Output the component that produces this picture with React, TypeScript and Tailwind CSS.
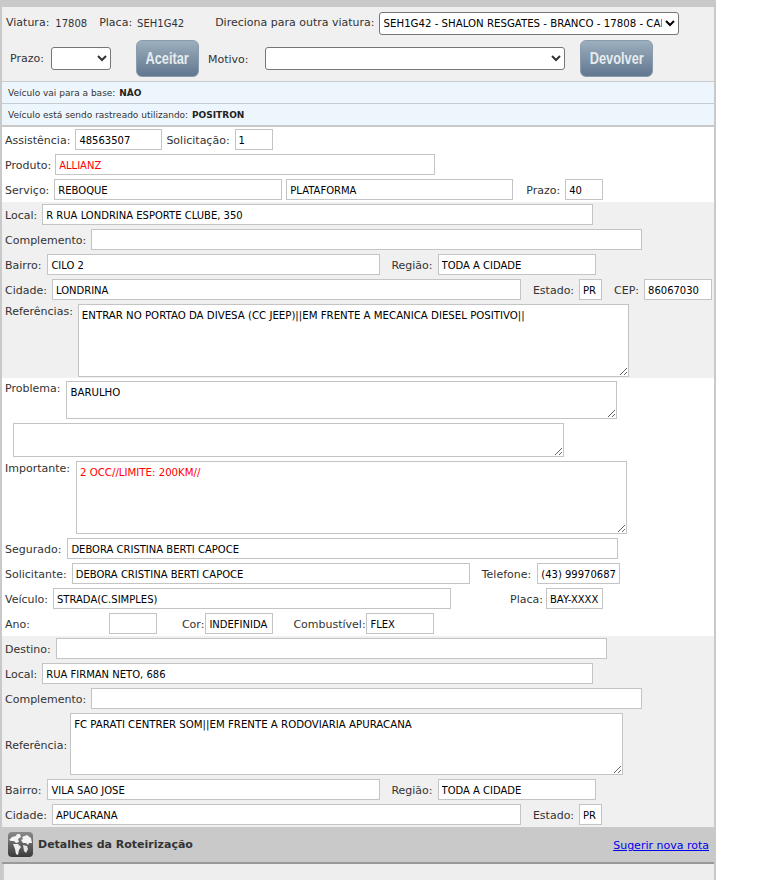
import React from "react";

const inputBase =
  "h-[21px] shrink-0 border border-[#c4c4c4] bg-white pl-[3px] pr-[3px] pt-[2px] text-[10px] font-['DejaVu_Sans',sans-serif] outline-none";
const inputCls = inputBase + " text-black";
const areaBase =
  "shrink-0 border border-[#c4c4c4] bg-white px-[3px] pt-[5px] text-[10.2px] leading-[12px] font-['DejaVu_Sans',sans-serif] outline-none";
const areaCls = areaBase + " text-black";
const labelCls = "pt-[4px] text-[11px] text-[#333] whitespace-nowrap";
const topLabelCls = "text-[11px] text-[#333] whitespace-nowrap";
const rowCls = "flex items-center h-[21px] mb-[4px]";

function Globe() {
  return (
    <svg width="25" height="25" viewBox="0 0 25 25" className="shrink-0">
      <defs>
        <linearGradient id="g" x1="0" y1="0" x2="0" y2="1">
          <stop offset="0" stopColor="#8a8a8a" />
          <stop offset="1" stopColor="#3a3a3a" />
        </linearGradient>
      </defs>
      <rect x="0" y="0" width="25" height="25" rx="4" fill="url(#g)" />
      <path d="M1 8l3-3 4-1 1-2 3 0 1 3-3 2 1 3-3 1-2-2-3 0z" fill="#f4f4f4" />
      <path d="M5 12l5 0 3 3-2 3-1 5-2-1-1-5z" fill="#eeeeee" />
      <path d="M14 5l5-2 4 3 1 5-3 0-1 2-2-2-3 0-2-3 2-1z" fill="#f4f4f4" />
      <path d="M15 13l4 1 1 3-2 4-2-2z" fill="#e4e4e4" />
    </svg>
  );
}

function Btn({ children, w }: { children: string; w: string }) {
  return (
    <button className={w + " h-[37px] shrink-0 rounded-[6px] border border-[#8a9bab] bg-gradient-to-b from-[#9cafbd] to-[#627790] text-center"}>
      <span className="inline-block scale-x-[0.8] text-[16px] font-bold text-[#e6ebef] font-['Liberation_Sans',sans-serif]">
        {children}
      </span>
    </button>
  );
}

export default function App() {
  return (
    <div className="w-[774px] h-[880px] overflow-hidden bg-white font-['DejaVu_Sans',sans-serif]">
      <div className="w-[716px] h-full border-l-[2px] border-r-[2px] border-[#c9c9c9] bg-white">
        <div className="h-[7px] bg-[#c9c9c9]" />
        {/* top panel */}
        <div className="h-[74px] bg-[#f0f0f0]">
          <div className="flex items-center h-[33px] pl-[4px] text-[11px] text-[#333]">
            <span className={topLabelCls}>Viatura:</span>
            <span className="ml-[6px] text-[10px]">17808</span>
            <span className="ml-[12px]">Placa:</span>
            <span className="ml-[5px] text-[10px]">SEH1G42</span>
            <span className="ml-[31px]">Direciona para outra viatura:</span>
            <select className="ml-[4px] w-[300px] h-[23px] bg-white border border-[#767676] rounded-[3px] text-[10.2px] text-black">
              <option>SEH1G42 - SHALON RESGATES - BRANCO - 17808 - CAMINHAO</option>
            </select>
          </div>
          <div className="flex items-center h-[37px] pl-[8px] text-[11px] text-[#333]">
            <span className="pt-[2px]">Prazo:</span>
            <select className="ml-[7px] w-[60px] h-[23px] bg-white border border-[#767676] rounded-[3px]" />
            <div className="ml-[25px]"><Btn w="w-[63px]">Aceitar</Btn></div>
            <span className="ml-[9px] pt-[4px]">Motivo:</span>
            <select className="ml-[17px] w-[300px] h-[23px] bg-white border border-[#767676] rounded-[3px]" />
            <div className="ml-[15px]"><Btn w="w-[73px]">Devolver</Btn></div>
          </div>
        </div>
        {/* info */}
        <div className="h-[22px] flex items-center pl-[6px] pt-[2px] border-t border-[#c8ccd0] bg-[#eef6fd] text-[9px] text-[#333]">
          <span>Veículo vai para a base: <b className="ml-[1px] text-[#222]">NÃO</b></span>
        </div>
        <div className="h-[22px] flex items-center pl-[6px] pt-[2px] border-t border-[#c8ccd0] bg-[#eef6fd] text-[9px] text-[#333]">
          <span>Veículo está sendo rastreado utilizando: <b className="ml-[1px] text-[#222]">POSITRON</b></span>
        </div>
        <div className="h-[2px] bg-[#c9c9c9]" />

        {/* section 1 */}
        <div className="pt-[2px] pl-[3px] h-[75px]">
          <div className={rowCls}>
            <span className={labelCls}>Assistência:</span>
            <input readOnly value="48563507" className={inputCls + " ml-[5px] w-[87px]"} />
            <span className={labelCls + " ml-[4px]"}>Solicitação:</span>
            <input readOnly value="1" className={inputCls + " ml-[5px] w-[38px]"} />
          </div>
          <div className={rowCls}>
            <span className={labelCls}>Produto:</span>
            <input readOnly value="ALLIANZ" className={inputBase + " ml-[4px] w-[380px] text-[#ff0000]"} />
          </div>
          <div className={rowCls}>
            <span className={labelCls}>Serviço:</span>
            <input readOnly value="REBOQUE" className={inputCls + " ml-[5px] w-[228px]"} />
            <input readOnly value="PLATAFORMA" className={inputCls + " ml-[4px] w-[227px]"} />
            <span className={labelCls + " ml-[13px]"}>Prazo:</span>
            <input readOnly value="40" className={inputCls + " ml-[5px] w-[38px]"} />
          </div>
        </div>

        {/* section 2 */}
        <div className="pt-[2px] pl-[3px] h-[176px] bg-[#f0f0f0]">
          <div className={rowCls}>
            <span className={labelCls}>Local:</span>
            <input readOnly value="R RUA LONDRINA ESPORTE CLUBE, 350" className={inputCls + " ml-[5px] w-[551px]"} />
          </div>
          <div className={rowCls}>
            <span className={labelCls}>Complemento:</span>
            <input readOnly value="" className={inputCls + " ml-[5px] w-[551px]"} />
          </div>
          <div className={rowCls}>
            <span className={labelCls}>Bairro:</span>
            <input readOnly value="CILO 2" className={inputCls + " ml-[6px] w-[333px]"} />
            <span className={labelCls + " ml-[11px]"}>Região:</span>
            <input readOnly value="TODA A CIDADE" className={inputCls + " ml-[5px] w-[158px]"} />
          </div>
          <div className={rowCls}>
            <span className={labelCls}>Cidade:</span>
            <input readOnly value="LONDRINA" className={inputCls + " ml-[5px] w-[469px]"} />
            <span className={labelCls + " ml-[12px]"}>Estado:</span>
            <input readOnly value="PR" className={inputCls + " ml-[5px] w-[23px]"} />
            <span className={labelCls + " ml-[12px]"}>CEP:</span>
            <input readOnly value="86067030" className={inputCls + " ml-[5px] w-[68px]"} />
          </div>
          <div className="flex items-start">
            <span className={topLabelCls}>Referências:</span>
            <textarea readOnly value="ENTRAR NO PORTAO DA DIVESA (CC JEEP)||EM FRENTE A MECANICA DIESEL POSITIVO||" className={areaCls + " ml-[5px] w-[551px] h-[73px]"} />
          </div>
        </div>

        {/* section 3 */}
        <div className="pt-[3px] pl-[3px] h-[258px]">
          <div className="flex items-start mb-[4px]">
            <span className={topLabelCls}>Problema:</span>
            <textarea readOnly value="BARULHO" className={areaCls + " ml-[6px] w-[551px] h-[38px]"} />
          </div>
          <div className="flex items-start mb-[4px]">
            <textarea readOnly value="" className={areaCls + " ml-[8px] w-[551px] h-[34px]"} />
          </div>
          <div className="flex items-start mb-[4px]">
            <span className={topLabelCls}>Importante:</span>
            <textarea readOnly value="2 OCC//LIMITE: 200KM//" className={areaBase + " ml-[6px] w-[551px] h-[73px] text-[#ff0000]"} />
          </div>
          <div className={rowCls}>
            <span className={labelCls}>Segurado:</span>
            <input readOnly value="DEBORA CRISTINA BERTI CAPOCE" className={inputCls + " ml-[6px] w-[551px]"} />
          </div>
          <div className={rowCls}>
            <span className={labelCls}>Solicitante:</span>
            <input readOnly value="DEBORA CRISTINA BERTI CAPOCE" className={inputCls + " ml-[5px] w-[398px]"} />
            <span className={labelCls + " ml-[12px]"}>Telefone:</span>
            <input readOnly value="(43) 999706870" className={inputCls + " ml-[6px] w-[83px]"} />
          </div>
          <div className={rowCls}>
            <span className={labelCls}>Veículo:</span>
            <input readOnly value="STRADA(C.SIMPLES)" className={inputCls + " ml-[5px] w-[398px]"} />
            <span className={labelCls + " ml-[59px]"}>Placa:</span>
            <input readOnly value="BAY-XXXX" className={inputCls + " ml-[3px] w-[57px]"} />
          </div>
          <div className={rowCls}>
            <span className={labelCls}>Ano:</span>
            <input readOnly value="" className={inputCls + " ml-[79px] w-[48px]"} />
            <span className={labelCls + " ml-[25px]"}>Cor:</span>
            <input readOnly value="INDEFINIDA" className={inputCls + " ml-[1px] w-[68px]"} />
            <span className={labelCls + " ml-[20px] w-[73px]"}>Combustível:</span>
            <input readOnly value="FLEX" className={inputCls + " w-[68px]"} />
          </div>
        </div>

        {/* section 4 */}
        <div className="pt-[2px] pl-[3px] h-[191px] bg-[#f0f0f0]">
          <div className={rowCls}>
            <span className={labelCls}>Destino:</span>
            <input readOnly value="" className={inputCls + " ml-[5px] w-[551px]"} />
          </div>
          <div className={rowCls}>
            <span className={labelCls}>Local:</span>
            <input readOnly value="RUA FIRMAN NETO, 686" className={inputCls + " ml-[5px] w-[551px]"} />
          </div>
          <div className={rowCls}>
            <span className={labelCls}>Complemento:</span>
            <input readOnly value="" className={inputCls + " ml-[5px] w-[551px]"} />
          </div>
          <div className="flex items-center mb-[4px]">
            <span className={labelCls}>Referência:</span>
            <textarea readOnly value="FC PARATI CENTRER SOM||EM FRENTE A RODOVIARIA APURACANA" className={areaCls + " ml-[3px] w-[553px] h-[62px]"} />
          </div>
          <div className={rowCls}>
            <span className={labelCls}>Bairro:</span>
            <input readOnly value="VILA SAO JOSE" className={inputCls + " ml-[6px] w-[333px]"} />
            <span className={labelCls + " ml-[11px]"}>Região:</span>
            <input readOnly value="TODA A CIDADE" className={inputCls + " ml-[5px] w-[158px]"} />
          </div>
          <div className={rowCls}>
            <span className={labelCls}>Cidade:</span>
            <input readOnly value="APUCARANA" className={inputCls + " ml-[5px] w-[469px]"} />
            <span className={labelCls + " ml-[12px]"}>Estado:</span>
            <input readOnly value="PR" className={inputCls + " ml-[5px] w-[23px]"} />
          </div>
        </div>

        {/* route header */}
        <div className="h-[35px] flex items-center pl-[6px] pr-[5px] bg-[#c9c9c9]">
          <Globe />
          <b className="ml-[5px] pt-[2px] text-[11px] text-[#333]">Detalhes da Roteirização</b>
          <a href="#" className="ml-auto pt-[4px] text-[11px] text-[#0000ee] underline">Sugerir nova rota</a>
        </div>
        <div className="h-[2px] bg-[#999]" />
        <div className="h-[20px]">
          <div className="h-full bg-[#eeeeee] border-l-[2px] border-[#cccccc]" />
        </div>
      </div>
    </div>
  );
}
